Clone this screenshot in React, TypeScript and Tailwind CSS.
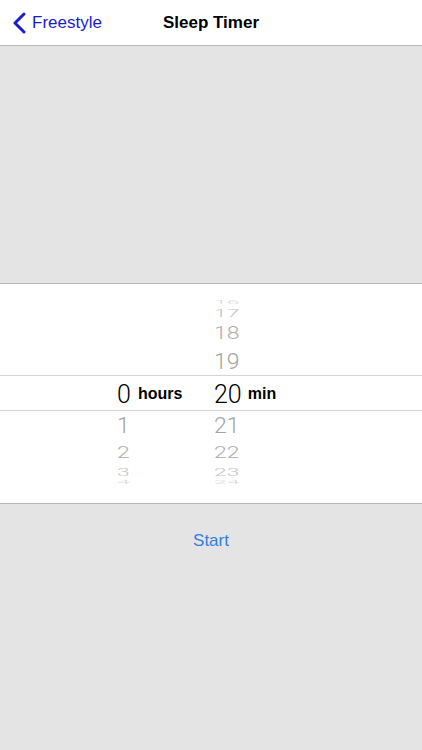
import React from 'react';

type Item = { label: string; h: string; scale: string; color: string };

const upperMin: Item[] = [
  { label: '16', h: 'h-[10px]', scale: 'scale-y-[0.2]', color: 'text-[#d8d8d8]' },
  { label: '17', h: 'h-[12px]', scale: 'scale-y-[0.45]', color: 'text-[#c4c4c4]' },
  { label: '18', h: 'h-[28px]', scale: 'scale-y-[0.8]', color: 'text-[#adadad]' },
  { label: '19', h: 'h-[28px]', scale: 'scale-y-[0.95]', color: 'text-[#a3a3a3]' },
];

const lowerHours: Item[] = [
  { label: '1', h: 'h-[28px]', scale: 'scale-y-[0.95]', color: 'text-[#a3a3a3]' },
  { label: '2', h: 'h-[26px]', scale: 'scale-y-[0.75]', color: 'text-[#adadad]' },
  { label: '3', h: 'h-[14px]', scale: 'scale-y-[0.45]', color: 'text-[#c4c4c4]' },
  { label: '4', h: 'h-[6px]', scale: 'scale-y-[0.2]', color: 'text-[#d8d8d8]' },
];

const lowerMin: Item[] = lowerHours.map((it, i) => ({ ...it, label: String(21 + i) }));

function WheelItem({ item }: { item: Item }) {
  return (
    <div className={`${item.h} flex items-center`}>
      <span className={`block text-[23px] leading-none font-light ${item.scale} ${item.color}`}>
        {item.label}
      </span>
    </div>
  );
}

export default function App() {
  const digits = { fontFamily: 'Roboto, "Liberation Sans", sans-serif' };
  const label = { fontFamily: '"Liberation Sans", Arial, sans-serif' };
  return (
    <div
      className="w-[422px] h-[750px] bg-[#e4e4e4] flex flex-col overflow-hidden"
      style={label}
    >
      {/* nav bar */}
      <div className="h-[46px] bg-white border-b border-[#b8b8b8] relative flex items-center justify-center shrink-0">
        <div className="absolute left-[12px] top-0 h-full flex items-center gap-[6px] text-[#1c1ccf]">
          <svg width="14" height="22" viewBox="0 0 14 22" fill="none">
            <path d="M12 2 L3 11 L12 20" stroke="#1c1ccf" strokeWidth="3" strokeLinecap="round" strokeLinejoin="round" />
          </svg>
          <span className="text-[17px] leading-none">Freestyle</span>
        </div>
        <span className="text-[17px] font-bold leading-none text-black">Sleep Timer</span>
      </div>

      {/* empty area */}
      <div className="h-[238px] shrink-0 border-b border-[#b8b8b8]" />

      {/* picker */}
      <div className="h-[220px] bg-white border-b border-[#b8b8b8] flex flex-col shrink-0" style={digits}>
        <div className="h-[91px] flex">
          <div className="w-[214px]" />
          <div className="flex flex-col justify-end">
            {upperMin.map((it) => (
              <WheelItem key={it.label} item={it} />
            ))}
          </div>
        </div>
        <div className="h-[36px] border-y border-[#d6d6d6] flex items-center pt-[2px]">
          <div className="w-[214px] pl-[117px] flex items-center gap-[7px]">
            <span className="text-[25px] font-light leading-none text-black">0</span>
            <span className="text-[16px] font-bold leading-none text-black" style={label}>
              hours
            </span>
          </div>
          <div className="flex items-center gap-[6px]">
            <span className="text-[25px] font-light leading-none text-black">20</span>
            <span className="text-[16px] font-bold leading-none text-black" style={label}>
              min
            </span>
          </div>
        </div>
        <div className="flex">
          <div className="w-[214px] pl-[117px] flex flex-col">
            {lowerHours.map((it) => (
              <WheelItem key={it.label} item={it} />
            ))}
          </div>
          <div className="flex flex-col">
            {lowerMin.map((it) => (
              <WheelItem key={it.label} item={it} />
            ))}
          </div>
        </div>
      </div>

      {/* start */}
      <div className="flex justify-center pt-[28px]">
        <span className="text-[17px] leading-none text-[#2f7fe0]">Start</span>
      </div>
    </div>
  );
}
